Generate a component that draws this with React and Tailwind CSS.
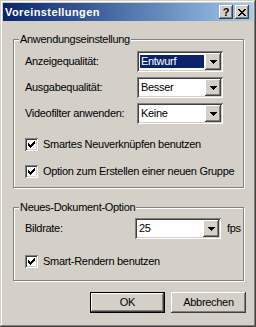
import React from "react";

const RAISED =
  "shadow-[inset_-1px_-1px_0_#404040,inset_1px_1px_0_#ffffff,inset_-2px_-2px_0_#808080,inset_2px_2px_0_#d4d0c8]";
const SUNKEN =
  "shadow-[inset_1px_1px_0_#808080,inset_-1px_-1px_0_#ffffff,inset_2px_2px_0_#404040,inset_-2px_-2px_0_#d4d0c8]";

function Pixels({ rows, color = "#000" }) {
  const w = rows[0].length;
  const h = rows.length;
  const rects = [];
  rows.forEach((r, y) =>
    r.split("").forEach((c, x) => {
      if (c === "x") rects.push(<rect key={x + "-" + y} x={x} y={y} width="1" height="1" fill={color} />);
    })
  );
  return (
    <svg width={w} height={h} viewBox={`0 0 ${w} ${h}`} shapeRendering="crispEdges">
      {rects}
    </svg>
  );
}

const CHECK = [
  "......x",
  ".....xx",
  "x...xxx",
  "xx.xxx.",
  "xxxxx..",
  ".xxx...",
  "..x....",
];

const CLOSE = [
  "xx....xx",
  ".xx..xx.",
  "..xxxx..",
  "...xx...",
  "..xxxx..",
  ".xx..xx.",
  "xx....xx",
];

const ARROW = ["xxxxxxx", ".xxxxx.", "..xxx..", "...x..."];

function Combo({ value, selected }) {
  return (
    <div className={`w-[86px] h-[21px] bg-white p-[2px] flex ${SUNKEN}`}>
      <div className="flex-1 flex items-center pl-[1px] pr-[1px]">
        <div
          className={`h-[13px] flex-1 flex items-center pl-[1px] leading-[13px] ${
            selected ? "bg-[#0a246a] text-white" : "text-black"
          }`}
        >
          {value}
        </div>
      </div>
      <div className={`w-[16px] h-full bg-[#d4d0c8] flex items-center justify-center ${RAISED}`}>
        <Pixels rows={ARROW} />
      </div>
    </div>
  );
}

function Check({ label, className = "" }) {
  return (
    <div className={`flex items-center gap-[5px] ${className}`}>
      <div className={`w-[13px] h-[13px] shrink-0 bg-white flex items-center justify-center ${SUNKEN}`}>
        <Pixels rows={CHECK} />
      </div>
      <span className="leading-[13px] whitespace-nowrap">{label}</span>
    </div>
  );
}

function Group({ title, className = "", children }) {
  return (
    <div
      className={`ml-[10px] w-[231px] border border-[#808080] shadow-[inset_1px_1px_0_#ffffff,1px_1px_0_#ffffff] ${className}`}
    >
      <div className="-mt-[7px] ml-[5px] px-[1px] w-fit bg-[#d4d0c8] leading-[13px] whitespace-nowrap">{title}</div>
      {children}
    </div>
  );
}

export default function App() {
  return (
    <div
      className={`w-[256px] h-[327px] bg-[#d4d0c8] p-[3px] text-[11px] tracking-[-0.3px] text-black font-['Liberation_Sans',Arial,sans-serif] shadow-[inset_-1px_-1px_0_#404040,inset_1px_1px_0_#d4d0c8,inset_-2px_-2px_0_#808080,inset_2px_2px_0_#ffffff]`}
    >
      {/* Title bar */}
      <div className="h-[18px] bg-linear-to-r from-[#0a246a] to-[#a6caf0] flex items-center pl-[2px] pr-[4px]">
        <span className="text-white font-bold leading-[13px] tracking-[0.4px] flex-1">Voreinstellungen</span>
        <div className="flex gap-[2px]">
          <div className={`w-[14px] h-[14px] bg-[#d4d0c8] flex items-center justify-center font-bold text-[11px] leading-[11px] tracking-normal ${RAISED}`}>
            ?
          </div>
          <div className={`w-[14px] h-[14px] bg-[#d4d0c8] flex items-center justify-center ${RAISED}`}>
            <Pixels rows={CLOSE} />
          </div>
        </div>
      </div>

      {/* Group 1 */}
      <Group title="Anwendungseinstellung" className="mt-[18px] h-[149px]">
        <div className="pl-[11px] mt-[5px] flex flex-col gap-[5px]">
          <div className="flex items-center">
            <span className="w-[112px]">Anzeigequalität:</span>
            <Combo value="Entwurf" selected />
          </div>
          <div className="flex items-center">
            <span className="w-[112px]">Ausgabequalität:</span>
            <Combo value="Besser" />
          </div>
          <div className="flex items-center">
            <span className="w-[112px]">Videofilter anwenden:</span>
            <Combo value="Keine" />
          </div>
        </div>
        <div className="pl-[11px]">
          <Check label="Smartes Neuverknüpfen benutzen" className="mt-[14px]" />
          <Check label="Option zum Erstellen einer neuen Gruppe" className="mt-[14px]" />
        </div>
      </Group>

      {/* Group 2 */}
      <Group title="Neues-Dokument-Option" className="mt-[19px] h-[74px]">
        <div className="pl-[11px] mt-[4px] flex items-center">
          <span className="w-[110px]">Bildrate:</span>
          <Combo value="25" />
          <span className="ml-[6px]">fps</span>
        </div>
        <div className="pl-[11px]">
          <Check label="Smart-Rendern benutzen" className="mt-[16px]" />
        </div>
      </Group>

      {/* Buttons */}
      <div className="mt-[11px] flex justify-end gap-[6px] pr-[7px]">
        <div className="w-[75px] h-[21px] border border-black">
          <div className={`w-full h-full bg-[#d4d0c8] flex items-center justify-center ${RAISED}`}>OK</div>
        </div>
        <div className={`w-[75px] h-[21px] bg-[#d4d0c8] flex items-center justify-center ${RAISED}`}>
          Abbrechen
        </div>
      </div>
    </div>
  );
}
